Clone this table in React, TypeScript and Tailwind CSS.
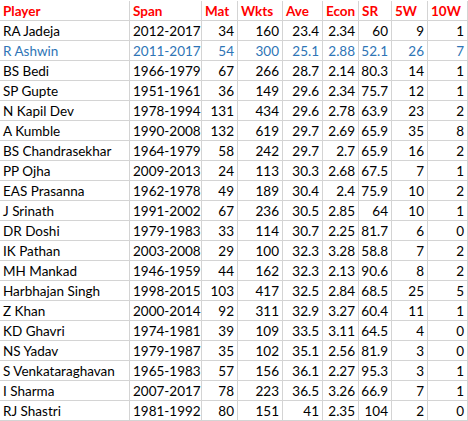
import React from "react";

const rows: (string | number)[][] = [
  ["RA Jadeja", "2012-2017", 34, 160, 23.4, 2.34, 60, 9, 1],
  ["R Ashwin", "2011-2017", 54, 300, 25.1, 2.88, 52.1, 26, 7],
  ["BS Bedi", "1966-1979", 67, 266, 28.7, 2.14, 80.3, 14, 1],
  ["SP Gupte", "1951-1961", 36, 149, 29.6, 2.34, 75.7, 12, 1],
  ["N Kapil Dev", "1978-1994", 131, 434, 29.6, 2.78, 63.9, 23, 2],
  ["A Kumble", "1990-2008", 132, 619, 29.7, 2.69, 65.9, 35, 8],
  ["BS Chandrasekhar", "1964-1979", 58, 242, 29.7, 2.7, 65.9, 16, 2],
  ["PP Ojha", "2009-2013", 24, 113, 30.3, 2.68, 67.5, 7, 1],
  ["EAS Prasanna", "1962-1978", 49, 189, 30.4, 2.4, 75.9, 10, 2],
  ["J Srinath", "1991-2002", 67, 236, 30.5, 2.85, 64, 10, 1],
  ["DR Doshi", "1979-1983", 33, 114, 30.7, 2.25, 81.7, 6, 0],
  ["IK Pathan", "2003-2008", 29, 100, 32.3, 3.28, 58.8, 7, 2],
  ["MH Mankad", "1946-1959", 44, 162, 32.3, 2.13, 90.6, 8, 2],
  ["Harbhajan Singh", "1998-2015", 103, 417, 32.5, 2.84, 68.5, 25, 5],
  ["Z Khan", "2000-2014", 92, 311, 32.9, 3.27, 60.4, 11, 1],
  ["KD Ghavri", "1974-1981", 39, 109, 33.5, 3.11, 64.5, 4, 0],
  ["NS Yadav", "1979-1987", 35, 102, 35.1, 2.56, 81.9, 3, 0],
  ["S Venkataraghavan", "1965-1983", 57, 156, 36.1, 2.27, 95.3, 3, 1],
  ["I Sharma", "2007-2017", 78, 223, 36.5, 3.26, 66.9, 7, 1],
  ["RJ Shastri", "1981-1992", 80, 151, 41, 2.35, 104, 2, 0],
];

const headers = ["Player", "Span", "Mat", "Wkts", "Ave", "Econ", "SR", "5W", "10W"];

export default function App() {
  return (
    <div
      className="w-[468px] h-[421px] bg-white pt-[1px] overflow-hidden"
      style={{ fontFamily: "Lato, 'Liberation Sans', sans-serif" }}
    >
      <div className="grid grid-cols-[130px_72px_36px_45px_40px_36px_33px_36px_40px] text-[13.5px]">
        {headers.map((h) => (
          <div
            key={h}
            className="h-[20px] border-r border-b border-[#d4d4d4] px-[3px] pt-[1px] leading-[19px] font-bold text-[#ff0000] whitespace-nowrap overflow-hidden"
          >
            {h}
          </div>
        ))}
        {rows.map((r, i) =>
          r.map((c, j) => (
            <div
              key={i + "-" + j}
              className={
                "h-[20px] border-r border-b border-[#d4d4d4] pt-[1px] leading-[19px] whitespace-nowrap overflow-hidden " +
                (j < 2 ? "text-left pl-[3px] " : "text-right pr-[3px] ") +
                (i === 1 ? "text-[#2e75b6]" : "text-black")
              }
            >
              {c}
            </div>
          ))
        )}
      </div>
    </div>
  );
}
